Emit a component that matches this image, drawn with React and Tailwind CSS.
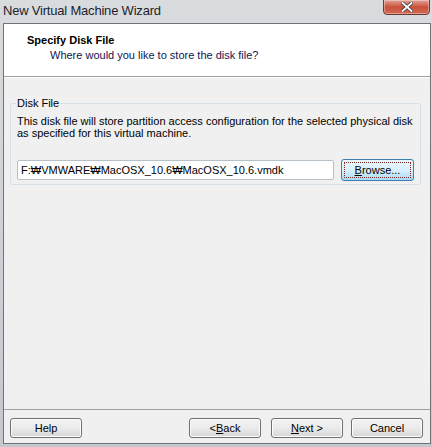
import React from 'react';

const FONT = { fontFamily: '"Liberation Sans", Arial, sans-serif' };

function WinButton({ children, className = '' }) {
  return (
    <button
      className={`w-[72px] h-[20px] rounded-[3px] border border-[#707070] bg-gradient-to-b from-[#f2f2f2] via-[#ebebeb] to-[#d6d6d6] text-[11px] text-black leading-none flex items-center justify-center shadow-[inset_0_0_0_1px_#fcfcfc] ${className}`}
    >
      {children}
    </button>
  );
}

export default function App() {
  return (
    <div
      className="w-[432px] h-[447px] bg-gradient-to-b from-[#d9dcdf] to-[#c4c8cc] flex flex-col pl-[3px] pr-[1px] pb-[3px] font-['Liberation_Sans',sans-serif]"
    >
      {/* title bar */}
      <div className="h-[23px] flex items-start justify-between shrink-0">
        <span className="text-[13px] tracking-[-0.2px] text-[#1d1d2b] pt-[4px] leading-none font-['Liberation_Sans',sans-serif]">
          New Virtual Machine Wizard
        </span>
        <div className="w-[47px] h-[16px] -mt-px mr-[1px] rounded-b-[4px] border border-[#6b3a34] bg-gradient-to-b from-[#e0a196] via-[#c9503a] to-[#d26a52] flex items-center justify-center shadow-[inset_0_0_0_1px_rgba(255,255,255,0.35)]">
          <svg width="12" height="10" viewBox="0 0 12 10">
            <path d="M1.5 1 L10.5 9 M10.5 1 L1.5 9" stroke="#3b3b4a" strokeWidth="3.4" strokeLinecap="square" />
            <path d="M1.5 1 L10.5 9 M10.5 1 L1.5 9" stroke="#ffffff" strokeWidth="1.8" strokeLinecap="square" />
          </svg>
        </div>
      </div>

      {/* client area */}
      <div className="flex-1 border border-[#6f7377] bg-[#f0f0f0] flex flex-col" style={FONT}>
        {/* header */}
        <div className="h-[53px] bg-white border-b border-[#a0a0a0] shrink-0 pl-[23px] pt-[9px]">
          <div className="text-[11px] font-bold text-black leading-[14px]">Specify Disk File</div>
          <div className="text-[11px] text-[#141450] leading-[14px] pl-[23px] pt-[1px]">
            Where would you like to store the disk file?
          </div>
        </div>
        <div className="h-px bg-white shrink-0" />

        {/* body */}
        <div className="flex-1 px-[6px] pt-[25px]">
          <div className="relative w-[411px] h-[82px] border border-[#d5dfe5] rounded-[3px] px-[6px]">
            <span className="absolute -top-[8px] left-[5px] bg-[#f0f0f0] px-[1px] text-[11px] text-black leading-[14px]">
              Disk File
            </span>
            <p className="text-[11px] text-black leading-[12px] pt-[11px]">
              This disk file will store partition access configuration for the selected physical disk
              <br />
              as specified for this virtual machine.
            </p>
            <div className="flex items-center gap-[7px] mt-[20px]">
              <div className="w-[317px] h-[20px] bg-white border border-[#b6c0c8] rounded-[2px] flex items-center pl-[3px] text-[11px] text-black">
                F:₩VMWARE₩MacOSX_10.6₩MacOSX_10.6.vmdk
              </div>
              <button className="w-[73px] h-[22px] rounded-[3px] border border-[#3c7fb1] bg-gradient-to-b from-[#eaf6fd] via-[#d9f0fc] to-[#a7d9f5] p-[2px]">
                <span className="w-full h-full border border-dotted border-[#7a2a1e] flex items-center justify-center text-[11px] text-black leading-none">
                  <span><u>B</u>rowse...</span>
                </span>
              </button>
            </div>
          </div>
        </div>

        {/* footer */}
        <div className="shrink-0 border-t border-[#a0a0a0] h-[34px] flex items-start pt-[8px] pl-[6px] pr-[7px]">
          <WinButton>Help</WinButton>
          <div className="flex-1" />
          <WinButton>&lt; <u>B</u>ack</WinButton>
          <WinButton className="ml-[10px]"><u>N</u>ext &gt;</WinButton>
          <WinButton className="ml-[8px]">Cancel</WinButton>
        </div>
      </div>
    </div>
  );
}
